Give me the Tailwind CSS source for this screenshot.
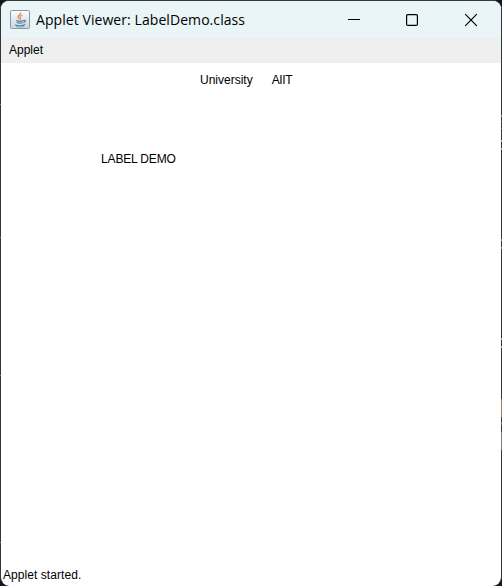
<!DOCTYPE html>
<html lang="en">
<head>
<meta charset="utf-8">
<title>Applet Viewer: LabelDemo.class</title>
<script src="https://cdn.jsdelivr.net/npm/@tailwindcss/browser@4"></script>
</head>
<body class="relative h-[586px] w-[502px] overflow-hidden bg-[#151426] font-['Liberation_Sans',Arial,sans-serif] text-xs text-black">
<div class="h-full w-full border border-b-0 border-[#35353f] rounded-[9px] overflow-hidden flex flex-col bg-white">
  <header class="flex h-[37px] shrink-0 items-center bg-[#e9f5f7] pl-[9px]">
    <svg class="size-5 shrink-0" viewBox="0 0 20 20" fill="none">
      <defs><linearGradient id="tile" x1="0" y1="0" x2="0" y2="1"><stop stop-color="#fdfdfd"/><stop offset="1" stop-color="#c9d5df"/></linearGradient></defs>
      <rect x=".5" y=".5" width="19" height="18" rx="1" fill="url(#tile)" stroke="#8799a8"/>
      <path d="M10.500 2.500c1 2-3 2.800-2.500 4.800.2.900 1 1.500 1.500 2.200M12.300 5c-1.800.8-2.600 1.500-2 2.500.5.800.3 1.400-.3 2" stroke="#e8853c" stroke-width="1.200"/>
      <path d="M6 10.500c2 .9 5.500.8 7.500 0M6.700 12.500c1.800.8 4.500.7 6 0M5 14.800c2.500 1.500 8 1.300 10-.3M13.500 10.500c2.500-.8 2.500 1.500 0 2.200" stroke="#557f9f" stroke-width="1.200"/>
      <path d="M6 16.500c3 .7 6 .6 8.500-.2" stroke="#8ba5b9"/>
    </svg>
    <h1 class="ml-[6px] w-[260px] whitespace-nowrap font-['Open_Sans','Noto_Sans',sans-serif] text-[14px] leading-5 tracking-[0.07px]">Applet Viewer: LabelDemo.class</h1>
    <svg class="ml-[51px] h-5 w-[132px] shrink-0" viewBox="0 0 132 20" fill="none" stroke="#000" stroke-width="1.200">
      <path d="M1 9.500h12" stroke-width="1"/>
      <rect x="59.600" y="4.600" width="10.800" height="10.800" rx="1.200"/>
      <path d="m118.200 4.200 11.600 11.600m0-11.600-11.600 11.600"/>
    </svg>
  </header>
  <nav class="flex h-[25px] shrink-0 items-start bg-[#efefef] pt-1 pl-2 leading-4"><span>Applet</span></nav>
  <main class="flex grow flex-col">
    <div class="flex gap-[19px] pt-[9px] pl-[199px] leading-4"><span>University</span><span class="tracking-[-0.4px]">AIIT</span></div>
    <p class="mt-[63px] ml-[100px] leading-4 tracking-[-0.15px]">LABEL DEMO</p>
  </main>
  <footer class="h-[19px] shrink-0 pl-0.5 leading-4 tracking-[0.06px]">Applet started.</footer>
</div>
<!-- desktop showing through along the window's edges -->
<svg class="pointer-events-none absolute inset-0 h-full w-full" viewBox="0 0 502 586" shape-rendering="crispEdges">
  <path d="M0 104h1v1h-1zM0 237h1v1h-1zM0 375h1v1h-1zM0 542h1v1h-1z" fill="#9a8522"/>
  <path d="M501 115h1v2h-1zM501 121h1v1h-1zM501 128h1v1h-1z" fill="#77749c"/>
  <path d="M501 140h1v2h-1zM501 148h1v2h-1zM501 239h1v2h-1zM501 247h1v2h-1zM501 338h1v2h-1zM501 346h1v2h-1z" fill="#8ba690"/>
  <path d="M501 399h1v18h-1z" fill="#a08058"/>
  <path d="M501 422h1v3h-1z" fill="#9a5a55"/>
  <path d="M501 432h1v18h-1z" fill="#7b8066"/>
</svg>
</body>
</html>
